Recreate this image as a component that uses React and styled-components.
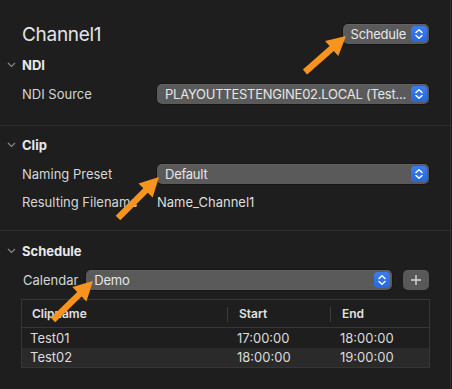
import React from "react"
import styled, { createGlobalStyle } from "styled-components"

const GlobalStyle = createGlobalStyle`
  html, body {
    margin: 0;
    padding: 0;
    background: #1e1e1e;
  }
  body {
    font-family: Inter, "Noto Sans", sans-serif;
    color: #dcdcdc;
    -webkit-font-smoothing: antialiased;
  }
`

const rows = [
  { name: "Test01", start: "17:00:00", end: "18:00:00" },
  { name: "Test02", start: "18:00:00", end: "19:00:00" },
]

// arrows drawn over the panel: tail -> tip
const arrows = [
  { from: [305, 72], to: [346, 36] },
  { from: [118, 218], to: [159, 177] },
  { from: [53, 320], to: [93, 281] },
]

const arrowPoints = ({ from, to }) => {
  const [x1, y1] = from
  const [x2, y2] = to
  const dx = x2 - x1
  const dy = y2 - y1
  const len = Math.hypot(dx, dy)
  const ux = dx / len
  const uy = dy / len
  const nx = -uy
  const ny = ux
  const shaft = 3.2
  const head = 10
  const headLen = 19
  const bx = x2 - ux * headLen
  const by = y2 - uy * headLen
  const pts = [
    [x1 + nx * shaft, y1 + ny * shaft],
    [bx + nx * shaft, by + ny * shaft],
    [bx + nx * head, by + ny * head],
    [x2, y2],
    [bx - nx * head, by - ny * head],
    [bx - nx * shaft, by - ny * shaft],
    [x1 - nx * shaft, y1 - ny * shaft],
  ]
  return pts.map(p => p.map(v => v.toFixed(1)).join(",")).join(" ")
}

const Stepper = () => (
  <StepperBox>
    <svg width="10" height="12" viewBox="0 0 10 12">
      <path
        d="M2 4.5 L5 1.8 L8 4.5 M2 7.5 L5 10.2 L8 7.5"
        fill="none"
        stroke="#fff"
        strokeWidth="1.5"
        strokeLinecap="round"
        strokeLinejoin="round"
      />
    </svg>
  </StepperBox>
)

const Chevron = () => (
  <ChevronBox>
    <svg width="9" height="6" viewBox="0 0 9 6">
      <path d="M1 1 L4.5 4.5 L8 1" fill="none" stroke="#8a8a8a" strokeWidth="1.1" />
    </svg>
  </ChevronBox>
)

const PopUp = ({ children, grow }) => (
  <PopUpButton grow={grow}>
    <PopUpLabel>{children}</PopUpLabel>
    <Stepper />
  </PopUpButton>
)

const App = () => {
  return (
    <>
      <GlobalStyle />
      <Panel>
        <TitleRow>
          <Title>Channel1</Title>
          <PopUp>Schedule</PopUp>
        </TitleRow>

        <Section top="11px" bottom="21px">
          <SectionHeader>
            <Chevron />
            NDI
          </SectionHeader>
          <FormRow>
            <Label>NDI Source</Label>
            <PopUp grow>PLAYOUTTESTENGINE02.LOCAL (Test...</PopUp>
          </FormRow>
        </Section>

        <Section top="10px" bottom="18px">
          <SectionHeader>
            <Chevron />
            Clip
          </SectionHeader>
          <FormRow>
            <Label>Naming Preset</Label>
            <PopUp grow>Default</PopUp>
          </FormRow>
          <FormRow>
            <Label>Resulting Filename</Label>
            <Value>Name_Channel1</Value>
          </FormRow>
        </Section>

        <Section top="11px" last>
          <SectionHeader>
            <Chevron />
            Schedule
          </SectionHeader>
          <CalendarRow>
            <CalendarLabel>Calendar</CalendarLabel>
            <PopUp grow>Demo</PopUp>
            <AddButton>
              <svg width="12" height="12" viewBox="0 0 12 12">
                <path d="M6 1 V11 M1 6 H11" stroke="#d8d8d8" strokeWidth="1.4" />
              </svg>
            </AddButton>
          </CalendarRow>
          <Table>
            <HeadRow>
              <HeadCell>Clipname</HeadCell>
              <HeadCell divider>Start</HeadCell>
              <HeadCell divider>End</HeadCell>
            </HeadRow>
            {rows.map((r, i) => (
              <BodyRow key={r.name} alt={i % 2 === 1}>
                <Cell first>{r.name}</Cell>
                <Cell>{r.start}</Cell>
                <Cell>{r.end}</Cell>
              </BodyRow>
            ))}
          </Table>
        </Section>

        <Overlay width="452" height="389" viewBox="0 0 452 389">
          {arrows.map((a, i) => (
            <polygon key={i} points={arrowPoints(a)} fill="#f7941d" />
          ))}
        </Overlay>
      </Panel>
    </>
  )
}

const Panel = styled.div`
  position: relative;
  width: 451px;
  height: 389px;
  box-sizing: border-box;
  border-right: 1px solid #2e2e2e;
  background: #1e1e1e;
  overflow: hidden;
`

const TitleRow = styled.div`
  display: flex;
  align-items: center;
  justify-content: space-between;
  height: 22px;
  padding: 23px 21px 0 22px;
`

const Title = styled.div`
  font-size: 19px;
  font-weight: 400;
  color: #e4e4e4;
  letter-spacing: -0.3px;
`

const Section = styled.section`
  display: flex;
  flex-direction: column;
  padding: ${({ top }) => top} 21px ${({ last, bottom }) => (last ? "0" : bottom)} 22px;
  border-bottom: ${({ last }) => (last ? "none" : "1px solid #2b2b2b")};
  gap: 8px;
`

const SectionHeader = styled.div`
  display: flex;
  align-items: center;
  height: 18px;
  margin-left: -16px;
  margin-bottom: 2px;
  font-size: 13px;
  font-weight: 700;
  color: #e8e8e8;
`

const ChevronBox = styled.span`
  display: flex;
  width: 16px;
  padding-left: 1px;
  box-sizing: border-box;
`

const FormRow = styled.div`
  display: flex;
  align-items: center;
  height: 20px;
`

const Label = styled.div`
  flex: 0 0 135px;
  font-size: 13px;
  color: #d6d6d6;
  white-space: nowrap;
  overflow: hidden;
`

const Value = styled.div`
  font-size: 13px;
  color: #dedede;
`

const PopUpButton = styled.div`
  display: flex;
  align-items: center;
  flex: ${({ grow }) => (grow ? "1 1 auto" : "0 0 auto")};
  min-width: 0;
  height: 20px;
  box-sizing: border-box;
  padding: 0 2px 0 8px;
  border-radius: 5px;
  background: #5a5a5a;
  box-shadow: inset 0 0.5px 0 rgba(255, 255, 255, 0.12), 0 0 0 0.5px rgba(0, 0, 0, 0.5);
`

const PopUpLabel = styled.span`
  flex: 1 1 auto;
  min-width: 0;
  font-size: 13px;
  letter-spacing: -0.25px;
  color: #e6e6e6;
  white-space: nowrap;
  overflow: hidden;
  padding-right: 5px;
`

const StepperBox = styled.span`
  display: flex;
  align-items: center;
  justify-content: center;
  flex: 0 0 16px;
  height: 16px;
  border-radius: 4px;
  background: linear-gradient(#3b7df0, #2866dc);
`

const CalendarRow = styled.div`
  display: flex;
  align-items: center;
  height: 20px;
  gap: 11px;
  margin-left: 1px;
`

const CalendarLabel = styled.div`
  font-size: 13px;
  color: #d6d6d6;
  margin-right: -3px;
`

const AddButton = styled.div`
  display: flex;
  align-items: center;
  justify-content: center;
  flex: 0 0 26px;
  height: 20px;
  border-radius: 5px;
  background: #585858;
  box-shadow: inset 0 0.5px 0 rgba(255, 255, 255, 0.1);
`

const Table = styled.div`
  display: flex;
  flex-direction: column;
  margin: 1px -1px 0 -1px;
  border: 1px solid #363636;
  background: #1e1e1e;
`

const columns = "205px 103px 1fr"

const HeadRow = styled.div`
  display: grid;
  grid-template-columns: ${columns};
  height: 27px;
  border-bottom: 1px solid #363636;
`

const HeadCell = styled.div`
  display: flex;
  align-items: center;
  padding-left: ${({ divider }) => (divider ? "12px" : "10px")};
  font-size: 12px;
  font-weight: 600;
  color: #e2e2e2;
  position: relative;
  &::before {
    content: "";
    display: ${({ divider }) => (divider ? "block" : "none")};
    position: absolute;
    left: 0;
    top: 7px;
    bottom: 5px;
    width: 1px;
    background: #3c3c3c;
  }
`

const BodyRow = styled.div`
  display: grid;
  grid-template-columns: ${columns};
  height: 19.5px;
  align-items: center;
  background: ${({ alt }) => (alt ? "#2a2a2a" : "transparent")};
`

const Cell = styled.div`
  padding-left: ${({ first }) => (first ? "8px" : "10px")};
  font-size: 13px;
  color: #dcdcdc;
`

const Overlay = styled.svg`
  position: absolute;
  left: 0;
  top: 0;
  pointer-events: none;
`

export default App
